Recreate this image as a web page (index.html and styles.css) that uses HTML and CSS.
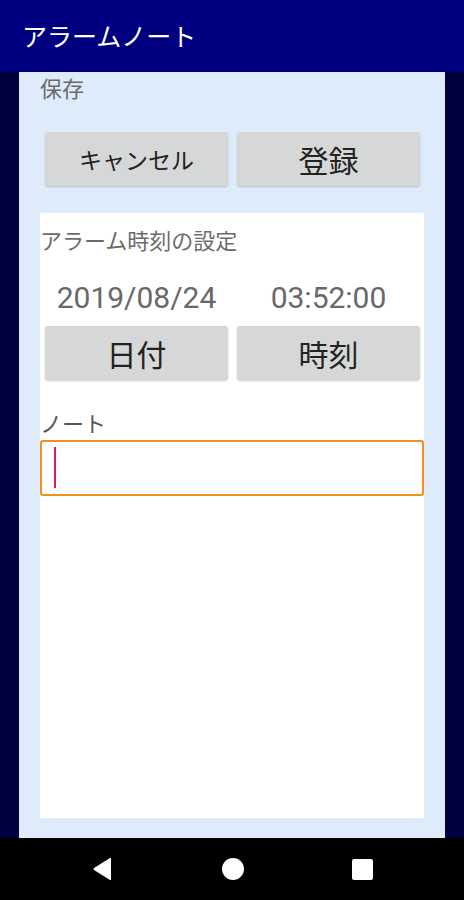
FILE: index.html
```html
<!DOCTYPE html>
<html lang="ja">
<head>
  <meta charset="UTF-8">
  <title>アラームノート</title>
  <meta name="viewport" content="width=device-width, initial-scale=1">
  <link rel="stylesheet" href="styles.css">
</head>
<body>
  <div class="app-bar">アラームノート</div>

  <div class="content">
    <div class="panel">
      <div class="label save-label">保存</div>

      <div class="button-row top-row">
        <button class="small">キャンセル</button>
        <button>登録</button>
      </div>

      <div class="card">
        <div class="label">アラーム時刻の設定</div>

        <div class="value-row">
          <div class="value">2019/08/24</div>
          <div class="value">03:52:00</div>
        </div>

        <div class="button-row">
          <button>日付</button>
          <button>時刻</button>
        </div>

        <div class="label note-label">ノート</div>
        <div class="note-input"><span class="caret"></span></div>
      </div>
    </div>
  </div>

  <div class="nav-bar">
    <svg width="22" height="24" viewBox="0 0 22 24"><path d="M19 1.5 L19 22.5 Q19 23.5 18 23 L2 13 Q1 12 2 11 L18 1 Q19 0.5 19 1.5 Z" fill="#fff"/></svg>
    <svg width="22" height="22" viewBox="0 0 22 22"><circle cx="11" cy="11" r="11" fill="#fff"/></svg>
    <svg width="21" height="21" viewBox="0 0 21 21"><rect x="0" y="0" width="21" height="21" rx="2" fill="#fff"/></svg>
  </div>
</body>
</html>
```

FILE: styles.css
```css
body, html {
  margin: 0;
  padding: 0;
  height: 100%;
  background-color: #00003e;
  font-family: "Noto Sans CJK JP", Roboto, sans-serif;
}

body {
  display: flex;
  flex-direction: column;
}

.app-bar {
  height: 72px;
  background-color: #000080;
  color: white;
  font-size: 25px;
  line-height: 70px;
  padding-left: 22px;
  box-sizing: border-box;
}

.content {
  flex: 1;
  display: flex;
  padding: 0 19px;
}

.panel {
  flex: 1;
  background-color: #ddebfb;
  padding: 0 21px 20px 21px;
  display: flex;
  flex-direction: column;
}

.label {
  font-size: 22px;
  line-height: 22px;
  color: #6b6b6b;
}

.save-label {
  margin-top: 4px;
}

.button-row {
  display: grid;
  grid-template-columns: 1fr 1fr;
  gap: 9px;
  padding: 0 4px 0 5px;
}

.top-row {
  margin-top: 34px;
}

.button-row button {
  height: 54px;
  border: none;
  border-radius: 3px;
  background-color: #d6d7d7;
  box-shadow: 0 1px 2px rgba(0, 0, 0, 0.2);
  font-family: "Noto Sans CJK JP", sans-serif;
  font-size: 30px;
  color: #222;
  padding: 0;
}

.button-row button.small {
  font-size: 23px;
}

.card {
  flex: 1;
  background-color: white;
  margin-top: 27px;
  padding-top: 15px;
}

.value-row {
  display: grid;
  grid-template-columns: 1fr 1fr;
  gap: 9px;
  padding: 0 4px 0 5px;
  margin-top: 33px;
  margin-bottom: 13px;
}

.value {
  text-align: center;
  font-family: Roboto, sans-serif;
  font-size: 30px;
  line-height: 30px;
  color: #686868;
}

.note-label {
  margin-top: 31px;
  color: #555;
}

.note-input {
  height: 56px;
  margin-top: 7px;
  border: 2px solid #f39019;
  border-radius: 3px;
  box-sizing: border-box;
  padding: 5px 0 0 12px;
}

.caret {
  display: block;
  width: 2px;
  height: 41px;
  background-color: #d81b60;
}

.nav-bar {
  height: 62px;
  background-color: black;
  display: flex;
  align-items: center;
  justify-content: space-between;
  padding: 0 91px 0 92px;
}
```
